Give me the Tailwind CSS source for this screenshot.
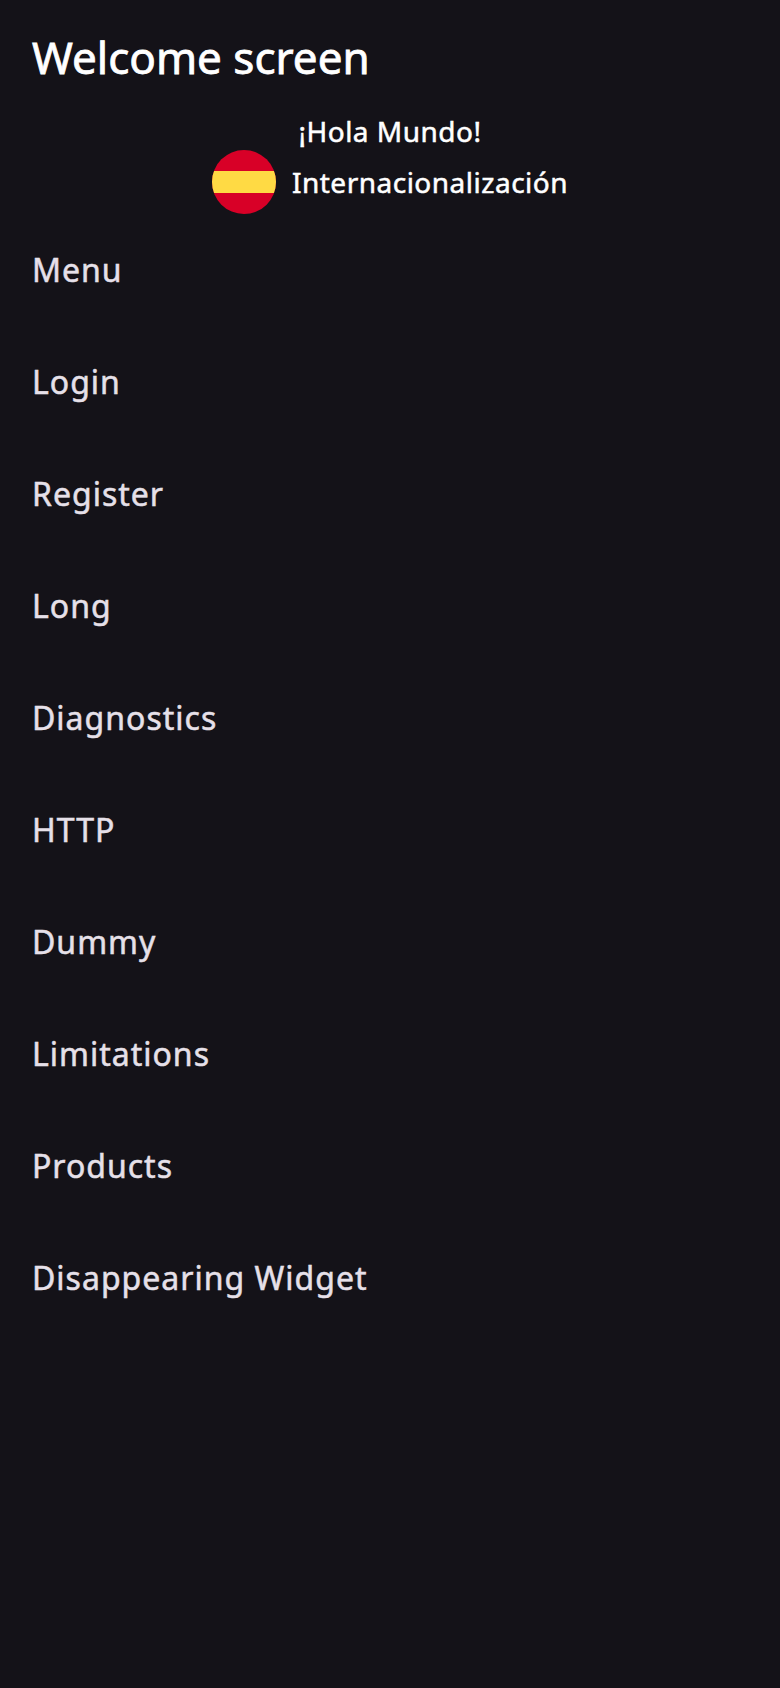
<!DOCTYPE html>
<html lang="es"><head><meta charset="utf-8"><title>Welcome screen</title>
<script src="https://cdn.jsdelivr.net/npm/@tailwindcss/browser@4"></script></head>
<body class="bg-[#141218] font-['Noto_Sans',sans-serif] text-white [-webkit-text-stroke:0.5px]">
<main class="flex h-[1688px] w-[780px] flex-col">
<h1 class="flex h-[112px] shrink-0 items-center px-8 pt-0.5 text-[44px] [-webkit-text-stroke:0.8px]">Welcome screen</h1>
<p class="flex h-[38px] shrink-0 items-center justify-center text-[28px] tracking-[0.5px]">¡Hola Mundo!</p>
<div class="flex h-16 shrink-0 items-center justify-center gap-4 text-[28px] tracking-[0.5px]">
<svg class="size-16" viewBox="0 0 64 64"><defs><clipPath id="round"><circle cx="32" cy="32" r="32"/></clipPath></defs><g clip-path="url(#round)"><path fill="#d80027" d="M0 0h64v64H0z"/><path fill="#ffda44" d="M0 21h64v22H0z"/></g></svg>
<span>Internacionalización</span></div>
<ul class="flex flex-col text-[32px] tracking-[1px] text-[#e6e0e9]">
<li class="flex h-28 items-center px-8">Menu</li>
<li class="flex h-28 items-center px-8">Login</li>
<li class="flex h-28 items-center px-8">Register</li>
<li class="flex h-28 items-center px-8">Long</li>
<li class="flex h-28 items-center px-8">Diagnostics</li>
<li class="flex h-28 items-center px-8">HTTP</li>
<li class="flex h-28 items-center px-8">Dummy</li>
<li class="flex h-28 items-center px-8">Limitations</li>
<li class="flex h-28 items-center px-8">Products</li>
<li class="flex h-28 items-center px-8">Disappearing Widget</li>
</ul></main></body></html>
